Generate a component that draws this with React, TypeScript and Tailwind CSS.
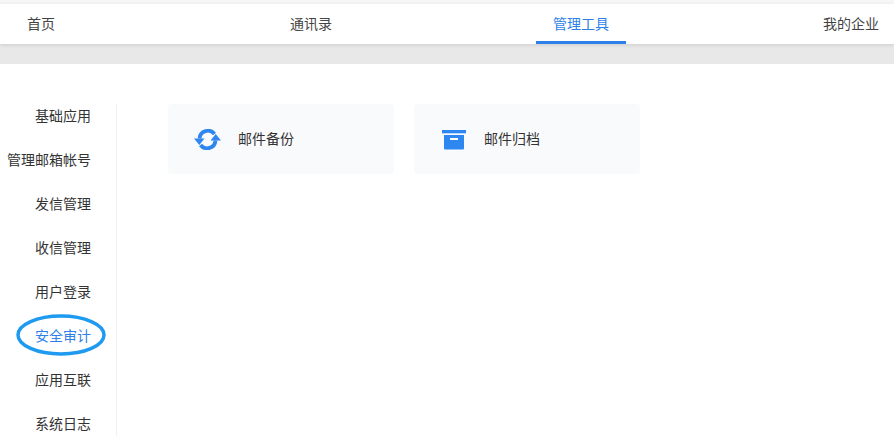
const navItems = ["首页", "通讯录", "管理工具", "我的企业"];
const sideItems = ["基础应用", "管理邮箱帐号", "发信管理", "收信管理", "用户登录", "安全审计", "应用互联", "系统日志"];

const SyncIcon = () => (
  <svg width="27" height="21" viewBox="0 0 27 21" className="shrink-0" fill="none">
    <path d="M5.500 9.500A8.400 8.400 0 0 1 20.500 5" stroke="#2e86f0" strokeWidth="3.8" />
    <path d="M21.500 11.500A8.400 8.400 0 0 1 6.500 16" stroke="#2e86f0" strokeWidth="3.8" />
    <path d="M0 9.500h10.500l-5.200 6.500zM16.500 11.500H27L21.700 5z" fill="#2e86f0" />
  </svg>
);

const ArchiveIcon = () => (
  <svg width="24" height="20" viewBox="0 0 24 20" className="mt-px shrink-0">
    <rect x="0" y="0" width="24" height="3.300" fill="#2e86f0" />
    <path d="M2 5h20v13.500a1 1 0 0 1-1 1H3a1 1 0 0 1-1-1z" fill="#2e86f0" />
    <rect x="8" y="8" width="8" height="2" fill="#fff" />
  </svg>
);

const Card = ({ title, icon, iconClass }: { title: string; icon: React.ReactNode; iconClass: string }) => (
  <div className="flex h-[70px] w-[226px] items-center rounded bg-[#f9fafc]">
    <div className={iconClass}>{icon}</div>
    <span className="pb-0.5 text-sm text-[#333]">{title}</span>
  </div>
);

export default function App() {
  return (
    <div className="h-[444px] w-[894px] overflow-hidden bg-white" style={{ fontFamily: '"Noto Sans CJK SC", "Liberation Sans", sans-serif' }}>
      <div className="h-1 bg-[#f7f7f7]" />
      <nav className="relative z-10 flex h-10 gap-[180px] bg-white shadow-[0_1px_4px_rgba(0,0,0,0.12)]">
        {navItems.map((item, i) => (
          <a
            key={item}
            className={
              "flex w-[90px] shrink-0 items-center justify-center border-b-[3px] pt-px text-sm first:ml-[-4px] " +
              (i === 2 ? "border-[#2e7fe8] text-[#2e7fe8]" : "border-transparent text-[#444]")
            }
          >
            {item}
          </a>
        ))}
      </nav>
      <div className="h-5 bg-[#e8e8e8]" />
      <div className="flex pt-10">
        <aside className="relative flex h-[332px] w-[117px] shrink-0 flex-col gap-5 border-r border-[#f0f0f0] pr-[25px]">
          {sideItems.map((item, i) => (
            <div
              key={item}
              className={"flex h-6 shrink-0 items-center justify-end whitespace-nowrap pb-0.5 text-sm " + (i === 5 ? "text-[#2e7fe8]" : "text-[#333]")}
            >
              {item}
            </div>
          ))}
          {/* 圈出安全审计 */}
          <svg width="90" height="42" viewBox="0 0 90 42" className="absolute left-4 top-[210px]" fill="none">
            <ellipse cx="45" cy="21" rx="43" ry="19" stroke="#1e9bf0" strokeWidth="3.500" />
          </svg>
        </aside>
        <div className="flex gap-5 pl-[51px]">
          <Card title="邮件备份" icon={<SyncIcon />} iconClass="w-[70px] pl-[26px]" />
          <Card title="邮件归档" icon={<ArchiveIcon />} iconClass="w-[70px] pl-7" />
        </div>
      </div>
    </div>
  );
}
